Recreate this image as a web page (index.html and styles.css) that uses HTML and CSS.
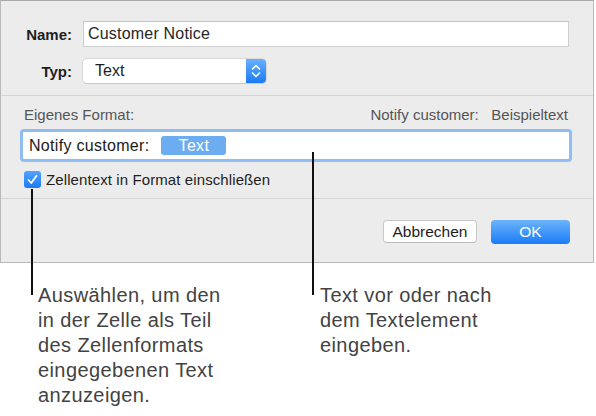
FILE: index.html
```html
<!DOCTYPE html>
<html lang="de">
<head>
<meta charset="utf-8">
<title>Benutzerdefiniertes Format</title>
<link rel="stylesheet" href="styles.css">
</head>
<body>
<div class="page">
  <div class="dialog">
    <div class="sec-top">
      <div class="form-grid">
        <label class="lbl">Name:</label>
        <div class="text-input">Customer Notice</div>
        <label class="lbl">Typ:</label>
        <div class="popup">
          <span class="popup-value">Text</span>
          <span class="stepper">
            <svg width="10" height="16" viewBox="0 0 10 16"><path d="M1.5 6 L5 2.5 L8.5 6 M1.5 10 L5 13.5 L8.5 10" fill="none" stroke="#fff" stroke-width="1.6" stroke-linecap="round" stroke-linejoin="round"/></svg>
          </span>
        </div>
      </div>
    </div>
    <div class="sec-mid">
      <div class="format-head">
        <span>Eigenes Format:</span>
        <span class="preview">Notify customer:&nbsp;&nbsp;&nbsp;Beispieltext</span>
      </div>
      <div class="token-field">
        <span class="token-prefix">Notify customer:</span>
        <span class="token">Text</span>
      </div>
      <div class="check-row">
        <span class="checkbox">
          <svg width="17" height="17" viewBox="0 0 17 17"><path d="M4.5 9 L7.3 12 L12.5 4.8" fill="none" stroke="#fff" stroke-width="1.8" stroke-linecap="round" stroke-linejoin="round"/></svg>
        </span>
        <span class="check-label">Zellentext in Format einschließen</span>
      </div>
    </div>
    <div class="sec-bottom">
      <button class="btn">Abbrechen</button>
      <button class="btn btn-primary">OK</button>
    </div>
  </div>
  <div class="callouts">
    <p class="callout">Auswählen, um den<br>in der Zelle als Teil<br>des Zellenformats<br>eingegebenen Text<br>anzuzeigen.</p>
    <p class="callout">Text vor oder nach<br>dem Textelement<br>eingeben.</p>
  </div>
  <span class="leader leader-left"></span>
  <span class="leader leader-right"></span>
</div>
</body>
</html>
```
FILE: styles.css
```css
* { box-sizing: border-box; }
html, body { margin: 0; padding: 0; background: #fff; }
body { font-family: "Liberation Sans", Arial, sans-serif; color: #222; }
.page { position: relative; width: 596px; height: 416px; overflow: hidden; }

.dialog {
  width: 594px;
  height: 263px;
  background: #ececec;
  border: 1px solid #b9b9b9;
  border-top-color: #a9a9a9;
  display: flex;
  flex-direction: column;
}

.sec-top {
  height: 95px;
  padding: 20px 24px 0 0;
  border-bottom: 1px solid #d6d6d6;
}
.form-grid {
  display: grid;
  grid-template-columns: 71px 1fr;
  grid-template-rows: 26px 24px;
  column-gap: 11px;
  row-gap: 12px;
  align-items: center;
}
.lbl { font-weight: bold; font-size: 15px; text-align: right; color: #1e1e1e; }
.text-input {
  height: 26px;
  background: #fff;
  border: 1px solid #cfcfcf;
  border-top-color: #c4c4c4;
  font-size: 16px;
  line-height: 24px;
  letter-spacing: 0.2px;
  padding-left: 4px;
  color: #262626;
}
.popup {
  width: 183px;
  height: 24px;
  background: #fff;
  border-radius: 4px;
  box-shadow: 0 0 0 0.5px #c6c6c6, 0 1px 1px rgba(0,0,0,0.12);
  display: flex;
  justify-content: space-between;
  overflow: hidden;
}
.popup-value { font-size: 16px; line-height: 24px; padding-left: 12px; color: #1e1e1e; }
.stepper {
  width: 20px;
  background: linear-gradient(#68b0ff, #1a7bf6);
  display: flex;
  align-items: center;
  justify-content: center;
}

.sec-mid {
  height: 103px;
  padding: 10px 21px 0 19px;
  border-bottom: 1px solid #d6d6d6;
  display: flex;
  flex-direction: column;
}
.format-head {
  display: flex;
  justify-content: space-between;
  padding: 0 4px 0 4px;
  font-size: 15px;
  line-height: 18px;
  color: #555;
}
.token-field {
  margin-top: 5px;
  height: 33px;
  border: 3px solid #8fbdf1;
  border-radius: 4px;
  background: #fff;
  display: flex;
  align-items: center;
  padding-left: 6px;
}
.token-prefix { font-size: 16px; letter-spacing: 0.3px; color: #1a1a1a; }
.token {
  margin-left: 12px;
  width: 65px;
  height: 19px;
  border-radius: 3px;
  background: #6cadf2;
  color: #fff;
  font-size: 16px;
  line-height: 19px;
  letter-spacing: 0.3px;
  text-align: center;
}
.check-row {
  margin-top: 9px;
  padding-left: 4px;
  display: flex;
  align-items: center;
  gap: 5px;
}
.checkbox {
  width: 17px;
  height: 17px;
  border-radius: 3px;
  background: linear-gradient(#52a2ff, #1c7bf3);
  display: flex;
}
.check-label { font-size: 15px; letter-spacing: 0.1px; color: #1e1e1e; }

.sec-bottom {
  flex: 1;
  display: flex;
  justify-content: flex-end;
  align-items: flex-start;
  gap: 14px;
  padding: 21px 23px 0 0;
}
.btn {
  height: 23px;
  border-radius: 4px;
  font-family: inherit;
  font-size: 15.5px;
  padding: 0;
  margin: 0;
}
.btn:not(.btn-primary) {
  width: 94px;
  background: #fff;
  border: 1px solid #c8c8c8;
  border-bottom-color: #bcbcbc;
  color: #1e1e1e;
}
.btn-primary {
  width: 79px;
  height: 24px;
  border: none;
  background: linear-gradient(#6db4fb, #1a7cf6);
  color: #fff;
}

.callouts {
  display: grid;
  grid-template-columns: 282px auto;
  padding-left: 38px;
  margin-top: 20px;
}
.callout {
  margin: 0;
  font-size: 20px;
  line-height: 25px;
  letter-spacing: 0.4px;
  color: #434343;
}

.leader { position: absolute; width: 2px; background: #111; }
.leader-left { left: 31px; top: 189px; height: 106px; }
.leader-right { left: 312px; top: 152px; height: 143px; }
```
